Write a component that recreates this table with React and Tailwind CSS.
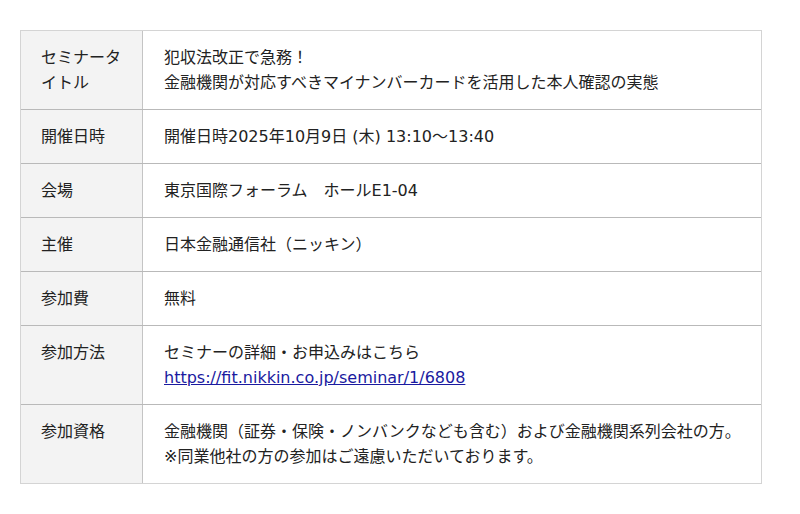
const rows = [
  {
    label: "セミナータイトル",
    lines: ["犯収法改正で急務！", "金融機関が対応すべきマイナンバーカードを活用した本人確認の実態"],
  },
  { label: "開催日時", lines: ["開催日時2025年10月9日 (木) 13:10〜13:40"] },
  { label: "会場", lines: ["東京国際フォーラム　ホールE1-04"] },
  { label: "主催", lines: ["日本金融通信社（ニッキン）"] },
  { label: "参加費", lines: ["無料"] },
  {
    label: "参加方法",
    lines: ["セミナーの詳細・お申込みはこちら"],
    link: "https://fit.nikkin.co.jp/seminar/1/6808",
  },
  {
    label: "参加資格",
    lines: [
      "金融機関（証券・保険・ノンバンクなども含む）および金融機関系列会社の方。",
      "※同業他社の方の参加はご遠慮いただいております。",
    ],
  },
];

export default function App() {
  return (
    <div
      className="min-h-screen bg-white pt-[30px] px-[20px] text-[16px] leading-[25px] text-[#222]"
      style={{ fontFamily: '"DejaVu Sans", "Noto Sans CJK JP", sans-serif' }}
    >
      <div className="w-[742px] border border-[#d4d4d4]">
        {rows.map((row, i) => (
          <div
            key={row.label}
            className={`flex ${i > 0 ? "border-t border-[#b9b9b9]" : ""}`}
          >
            <div className="w-[122px] shrink-0 bg-[#f3f3f3] border-r border-[#c4c4c4] px-[20px] py-[14px]">
              {row.label}
            </div>
            <div className="flex-1 pl-[21px] pr-[16px] py-[14px]">
              {row.lines.map((line) => (
                <div key={line}>{line}</div>
              ))}
              {row.link && (
                <div>
                  <a href={row.link} className="text-[#1a1aa0] underline">
                    {row.link}
                  </a>
                </div>
              )}
            </div>
          </div>
        ))}
      </div>
    </div>
  );
}
